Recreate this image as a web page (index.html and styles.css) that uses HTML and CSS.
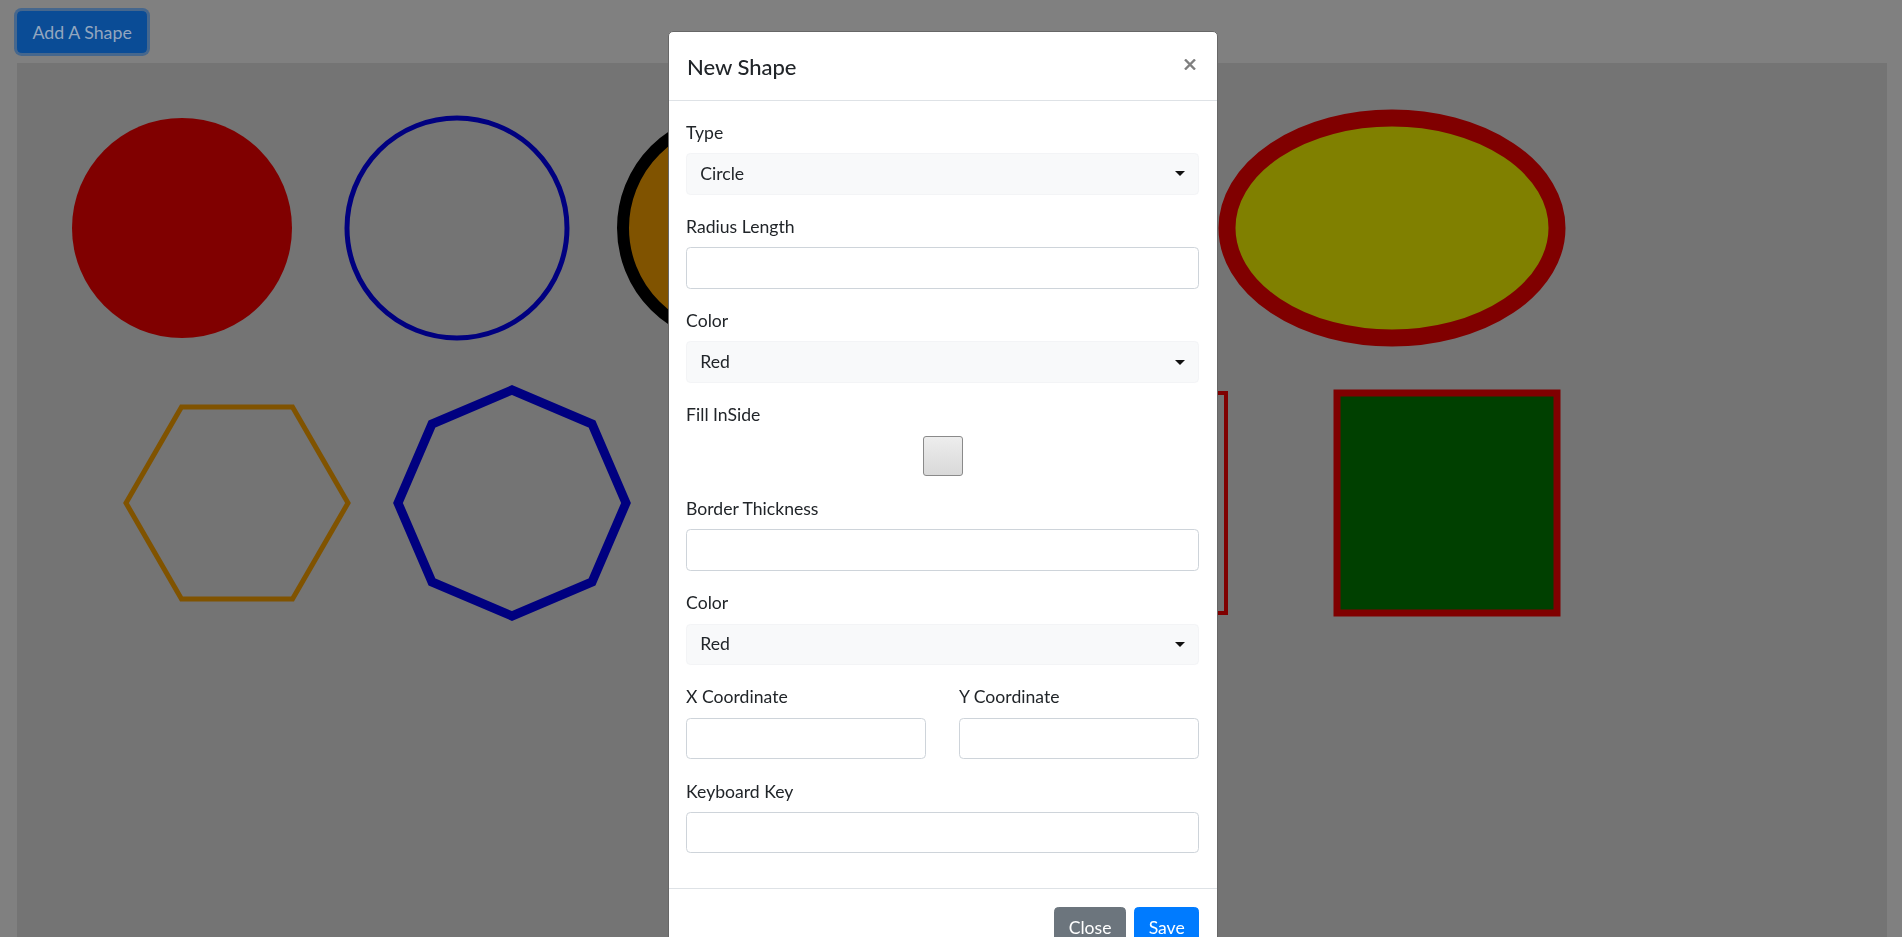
FILE: index.html
```html
<!DOCTYPE html>
<html lang="en">
<head>
<meta charset="utf-8">
<title>Shapes</title>
<link rel="stylesheet" href="styles.css">
</head>
<body>
<div class="app">
  <button class="btn btn-add" type="button">Add A Shape</button>
  <div class="board">
    <svg class="board-svg" width="1870" height="880" viewBox="0 0 1870 880">
      <circle cx="165" cy="165" r="110" fill="#800000"/>
      <circle cx="440" cy="165" r="110" fill="none" stroke="#000080" stroke-width="5"/>
      <circle cx="716" cy="165" r="110" fill="#805300" stroke="#000000" stroke-width="12"/>
      <ellipse cx="1375" cy="165" rx="165" ry="110" fill="#808000" stroke="#800000" stroke-width="17"/>
      <polygon points="331,440 275.5,343.9 164.5,343.9 109,440 164.5,536.1 275.5,536.1" fill="none" stroke="#805300" stroke-width="5"/>
      <polygon points="495,327 575,361 609,440 575,519 495,553 415,519 381,440 415,361" fill="none" stroke="#000080" stroke-width="9"/>
      <rect x="989" y="330" width="220" height="220" fill="none" stroke="#800000" stroke-width="4"/>
      <rect x="1320" y="330" width="220" height="220" fill="#004000" stroke="#800000" stroke-width="7"/>
    </svg>
  </div>
</div>

<div class="modal">
  <div class="modal-dialog">
    <div class="modal-content">
      <div class="modal-header">
        <h5 class="modal-title">New Shape</h5>
        <button class="close" type="button" aria-label="Close">
          <svg width="12" height="11" viewBox="0 0 12 11"><path d="M1 0.5 L11 10.5 M11 0.5 L1 10.5" stroke="#7f7f7f" stroke-width="2.4" fill="none"/></svg>
        </button>
      </div>
      <div class="modal-body">
        <div class="group">
          <label class="label">Type</label>
          <div class="control select"><span>Circle</span><svg class="caret" width="10" height="5" viewBox="0 0 10 5"><path d="M0 0 H10 L5 5 Z" fill="#111"/></svg></div>
        </div>
        <div class="group">
          <label class="label">Radius Length</label>
          <input class="control" type="text">
        </div>
        <div class="group">
          <label class="label">Color</label>
          <div class="control select"><span>Red</span><svg class="caret" width="10" height="5" viewBox="0 0 10 5"><path d="M0 0 H10 L5 5 Z" fill="#111"/></svg></div>
        </div>
        <div class="group">
          <label class="label">Fill InSide</label>
          <div class="check-wrap"><input class="check" type="checkbox"></div>
        </div>
        <div class="group">
          <label class="label">Border Thickness</label>
          <input class="control" type="text">
        </div>
        <div class="group">
          <label class="label">Color</label>
          <div class="control select"><span>Red</span><svg class="caret" width="10" height="5" viewBox="0 0 10 5"><path d="M0 0 H10 L5 5 Z" fill="#111"/></svg></div>
        </div>
        <div class="group row">
          <div class="col">
            <label class="label">X Coordinate</label>
            <input class="control" type="text">
          </div>
          <div class="col">
            <label class="label">Y Coordinate</label>
            <input class="control" type="text">
          </div>
        </div>
        <div class="group">
          <label class="label">Keyboard Key</label>
          <input class="control" type="text">
        </div>
      </div>
      <div class="modal-footer">
        <button class="btn btn-secondary" type="button">Close</button>
        <button class="btn btn-primary" type="button">Save</button>
      </div>
    </div>
  </div>
</div>
</body>
</html>
```

FILE: styles.css
```css
html, body {
  margin: 0;
  height: 100%;
  overflow: hidden;
}

body {
  background: #808080;
  font-family: Lato, "Liberation Sans", sans-serif;
  font-size: 17.6px;
  line-height: 1.5;
  color: #212529;
}

.app {
  padding: 11px 0 0 17px;
}

.btn {
  display: inline-block;
  font-family: inherit;
  font-size: 17.6px;
  line-height: 26px;
  padding: 6.6px 13.2px;
  border: 1px solid transparent;
  border-radius: 4.4px;
  color: #fff;
  cursor: pointer;
}

.btn-add {
  display: block;
  line-height: 27px;
  padding: 6.6px 14.5px;
  font-size: 17.8px;
  background: #0a4c96;
  border-color: #0a4c96;
  color: #93a6bf;
  box-shadow: 0 0 0 3px #46678d;
}

.board {
  margin-top: 10px;
  width: 1870px;
  height: 880px;
  background: #747474;
}

.board-svg {
  display: block;
}

.modal {
  position: fixed;
  top: 0;
  left: 0;
  right: 0;
  bottom: 0;
  padding-right: 17px;
  overflow: hidden;
  display: flex;
  justify-content: center;
  align-items: flex-start;
}

.modal-dialog {
  width: 550px;
  margin-top: 31px;
}

.modal-content {
  background: #fff;
  border: 1px solid #676767;
  border-radius: 5px;
}

.modal-header {
  display: flex;
  align-items: flex-start;
  padding: 17.6px 17.6px 17px 18.4px;
  border-bottom: 1px solid #dee2e6;
}

.modal-title {
  margin: 0;
  font-size: 22px;
  font-weight: 500;
  line-height: 33px;
  color: #212529;
}

.close {
  margin: 9px 3px 0 auto;
  padding: 0;
  border: 0;
  background: none;
  line-height: 0;
  cursor: pointer;
}

.modal-body {
  padding: 17.6px;
}

.group {
  margin-bottom: 17.5px;
}

.label {
  display: block;
  padding-top: 1.8px;
  margin-bottom: 7.2px;
  line-height: 26px;
  font-size: 17.6px;
}

.control {
  display: block;
  box-sizing: border-box;
  width: 100%;
  height: 41.6px;
  margin: 0;
  padding: 6.6px 13.2px;
  border: 1px solid #ced4da;
  border-radius: 4.4px;
  background: #fff;
  font-family: inherit;
  font-size: 17.6px;
  color: #495057;
}

.select {
  display: flex;
  align-items: center;
  justify-content: space-between;
  padding-right: 13px;
  background: #f8f9fa;
  border-color: #f3f4f6;
  color: #212529;
}

.caret {
  display: block;
}

.check-wrap {
  height: 41.6px;
  display: flex;
  justify-content: center;
  align-items: center;
}

.check {
  -webkit-appearance: none;
  appearance: none;
  display: block;
  box-sizing: border-box;
  width: 40px;
  height: 40px;
  margin: 0;
  border: 1px solid #8a8a8a;
  border-radius: 3px;
  background: linear-gradient(#ededed, #d9d9d9);
}

.row {
  display: grid;
  grid-template-columns: 1fr 1fr;
  column-gap: 33px;
}

.modal-footer {
  display: flex;
  justify-content: flex-end;
  align-items: center;
  padding: 13.2px;
  border-top: 1px solid #dee2e6;
}

.modal-footer .btn {
  margin: 4.4px;
}

.btn-secondary {
  background: #6c757d;
  border-color: #6c757d;
}

.btn-primary {
  background: #007bff;
  border-color: #007bff;
}
```
